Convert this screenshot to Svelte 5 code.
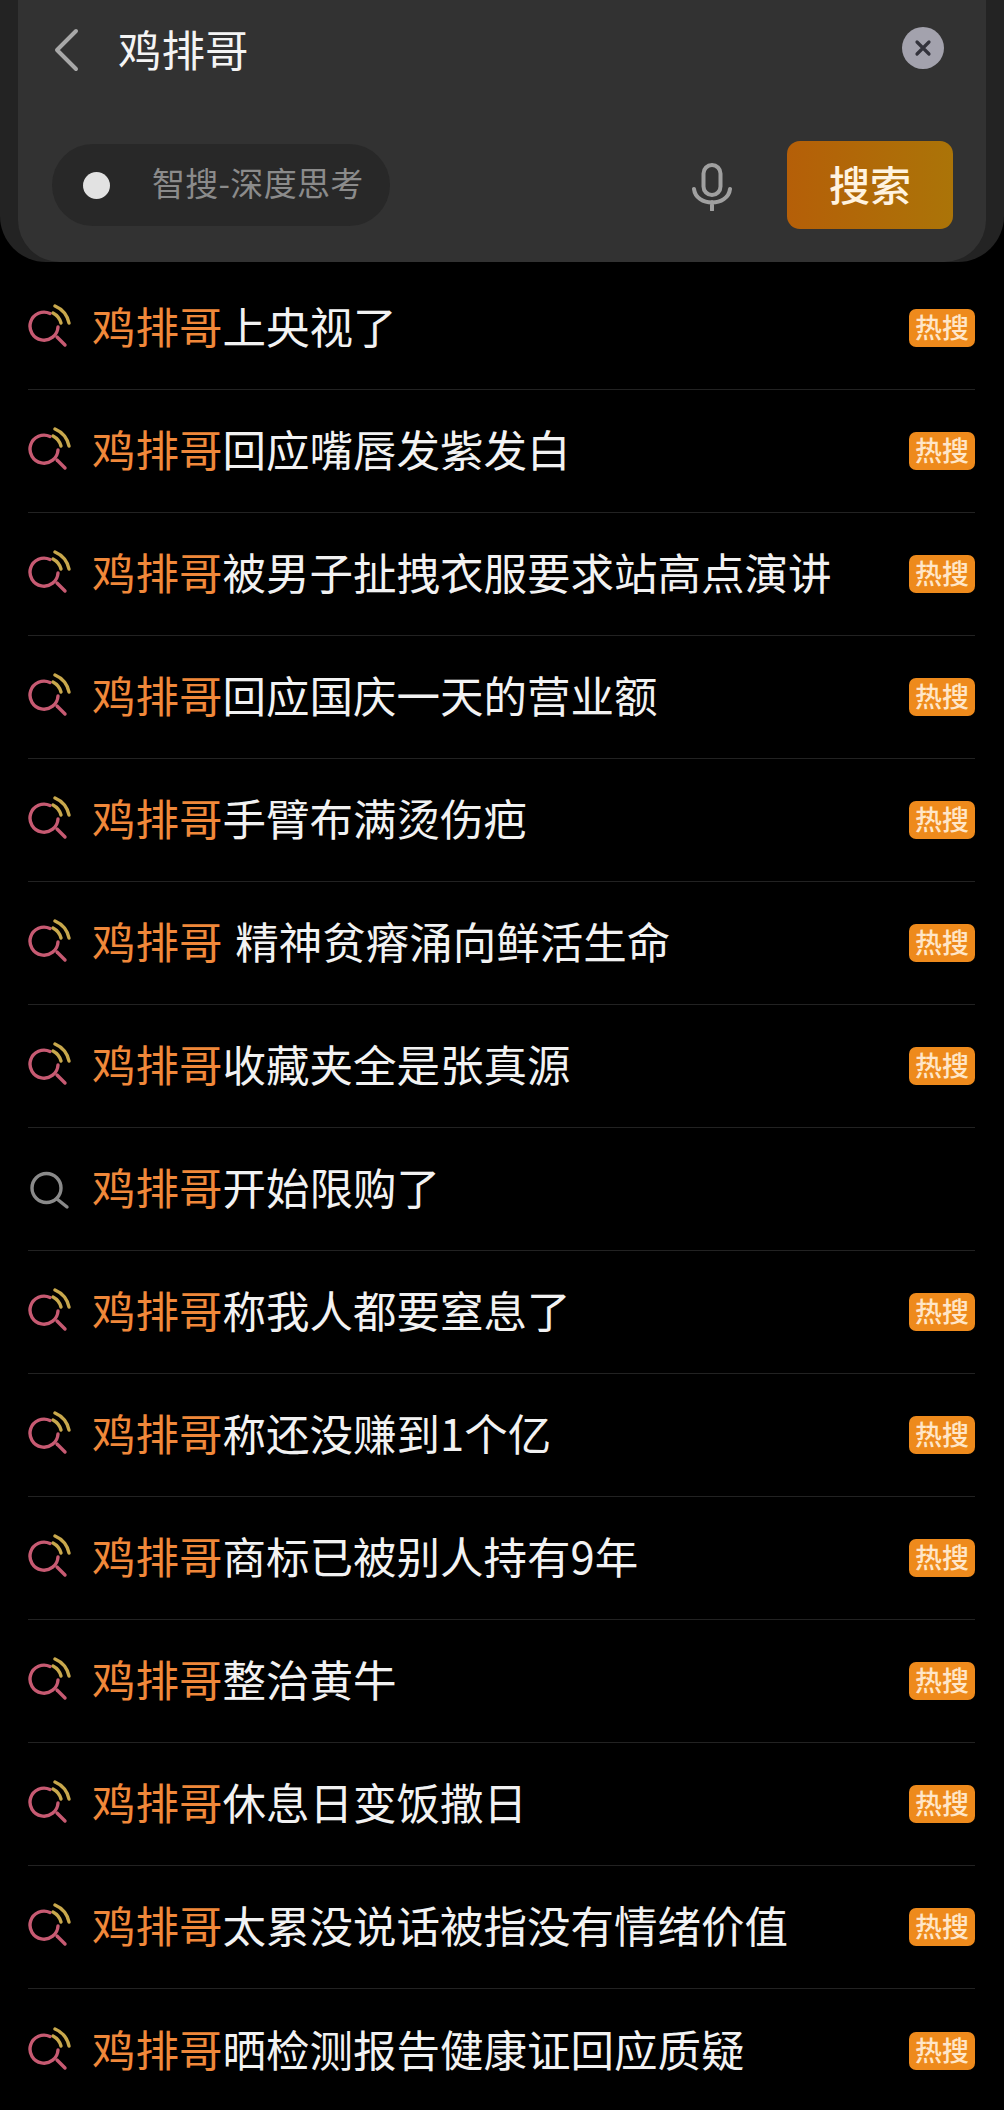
<script>
  const suffixes = [
    { text: "上央视了", hot: true },
    { text: "回应嘴唇发紫发白", hot: true },
    { text: "被男子扯拽衣服要求站高点演讲", hot: true },
    { text: "回应国庆一天的营业额", hot: true },
    { text: "手臂布满烫伤疤", hot: true },
    { text: " 精神贫瘠涌向鲜活生命", hot: true },
    { text: "收藏夹全是张真源", hot: true },
    { text: "开始限购了", hot: false },
    { text: "称我人都要窒息了", hot: true },
    { text: "称还没赚到1个亿", hot: true },
    { text: "商标已被别人持有9年", hot: true },
    { text: "整治黄牛", hot: true },
    { text: "休息日变饭撒日", hot: true },
    { text: "太累没说话被指没有情绪价值", hot: true },
    { text: "晒检测报告健康证回应质疑", hot: true },
  ];
</script>

<div class="page">
  <header class="top">
    <div class="panel">
      <div class="line first">
        <svg class="back" width="28" height="44" viewBox="0 0 28 44" aria-hidden="true">
          <path d="M24 3 L5 22 L24 41" />
        </svg>
        <span class="query">鸡排哥</span>
        <span class="clear">
          <svg width="18" height="18" viewBox="0 0 18 18" aria-hidden="true">
            <path d="M3 3 L15 15 M15 3 L3 15" />
          </svg>
        </span>
      </div>
      <div class="line second">
        <div class="pill">
          <span class="dot"></span>
          <span class="pill-text">智搜-深度思考</span>
        </div>
        <svg class="mic" width="40" height="48" viewBox="0 0 40 48" aria-hidden="true">
          <rect x="11.5" y="2" width="17" height="30" rx="8.5" />
          <path d="M2 26 C4 44 36 44 38 26 M20 39 V47" />
        </svg>
        <div class="go"><span>搜索</span></div>
      </div>
    </div>
  </header>

  <ul class="list">
    {#each suffixes as row}
      <li class="row">
        {#if row.hot}
          <svg class="icon" width="48" height="48" viewBox="0 0 48 48" aria-hidden="true">
            <path class="pink" d="M23 9.5 A14 14 0 1 0 31 23" />
            <path class="pink" d="M30 33 L38 41" />
            <path class="gold" d="M28 2 A24 24 0 0 1 42 19" />
            <path class="gold" d="M26 9 A16 16 0 0 1 34 19" />
          </svg>
        {:else}
          <svg class="icon" width="48" height="48" viewBox="0 0 48 48" aria-hidden="true">
            <circle class="grey" cx="19.5" cy="23" r="14.5" />
            <path class="grey" d="M30 34 L40 42" />
          </svg>
        {/if}
        <span class="label"><span class="kw">鸡排哥</span>{row.text}</span>
        {#if row.hot}
          <span class="badge">热搜</span>
        {/if}
      </li>
    {/each}
  </ul>
</div>

<style>
  :global(body) {
    margin: 0;
    background: #000;
  }
  .page {
    width: 1004px;
    height: 2110px;
    overflow: hidden;
    background: #000;
    color: #fff;
    font-family: "Noto Sans CJK SC", "Noto Sans", sans-serif;
  }
  .top {
    height: 262px;
    background: #232323;
    border-radius: 0 0 46px 46px;
    padding: 0 18px;
    box-sizing: border-box;
  }
  .panel {
    height: 100%;
    background: #323232;
    border-radius: 0 0 42px 42px;
    padding: 0 33px 0 34px;
    box-sizing: border-box;
    display: flex;
    flex-direction: column;
  }
  .line {
    display: flex;
    align-items: center;
  }
  .first {
    height: 100px;
  }
  .back {
    flex: none;
  }
  .back path {
    fill: none;
    stroke: #a8a8a8;
    stroke-width: 4;
    stroke-linecap: round;
    stroke-linejoin: round;
  }
  .query {
    margin-left: 38px;
    padding-bottom: 2px;
    font-size: 43.5px;
    line-height: 60px;
    color: #f4f4f4;
  }
  .clear {
    margin-left: auto;
    margin-right: 9px;
    margin-top: -4px;
    width: 42px;
    height: 42px;
    border-radius: 50%;
    background: #a3a2ad;
    display: flex;
    align-items: center;
    justify-content: center;
  }
  .clear path {
    fill: none;
    stroke: #33333c;
    stroke-width: 3.2;
    stroke-linecap: round;
  }
  .second {
    height: 88px;
    margin-top: 41px;
  }
  .pill {
    width: 338px;
    height: 82px;
    border-radius: 41px;
    background: #282828;
    display: flex;
    align-items: center;
    box-sizing: border-box;
    padding-left: 31px;
  }
  .dot {
    width: 27px;
    height: 27px;
    border-radius: 50%;
    background: #e2e2e2;
    flex: none;
  }
  .pill-text {
    margin-left: 42px;
    padding-bottom: 6px;
    font-size: 33px;
    letter-spacing: 0.3px;
    color: #8b8b8b;
    white-space: nowrap;
  }
  .mic {
    margin-left: auto;
    flex: none;
    margin-top: 4px;
  }
  .mic rect,
  .mic path {
    fill: none;
    stroke: #a0a0a0;
    stroke-width: 4;
    stroke-linecap: round;
  }
  .go {
    margin-left: 55px;
    width: 166px;
    height: 88px;
    border-radius: 13px;
    background: linear-gradient(90deg, #b55f08, #ab7408);
    color: #fff3e0;
    font-size: 41px;
    font-weight: 500;
    display: flex;
    align-items: center;
    justify-content: center;
    flex: none;
  }
  .go span {
    padding-bottom: 5px;
  }
  .list {
    list-style: none;
    margin: 5px 0 0;
    padding: 0 29px 0 28px;
  }
  .row {
    height: 123px;
    box-sizing: border-box;
    border-bottom: 1px solid #222222;
    display: flex;
    align-items: center;
  }
  .row:last-child {
    border-bottom: none;
  }
  .icon {
    flex: none;
    margin-left: -1px;
  }
  .icon circle,
  .icon path {
    fill: none;
    stroke-width: 3.4;
    stroke-linecap: round;
  }
  .pink {
    stroke: #c75a72;
  }
  .gold {
    stroke: #c8a84c;
  }
  .grey {
    stroke: #8a8a8a;
  }
  .label {
    margin-left: 17px;
    padding-bottom: 4px;
    font-size: 43.5px;
    line-height: 60px;
    white-space: pre;
    word-spacing: 3px;
    color: #f2f2f2;
  }
  .kw {
    color: #f0883a;
  }
  .badge {
    margin-left: auto;
    width: 66px;
    height: 38px;
    border-radius: 7px;
    background: #ee8a1c;
    color: #ffe6c8;
    font-size: 27px;
    font-weight: 500;
    line-height: 36px;
    text-align: center;
    flex: none;
  }
</style>
